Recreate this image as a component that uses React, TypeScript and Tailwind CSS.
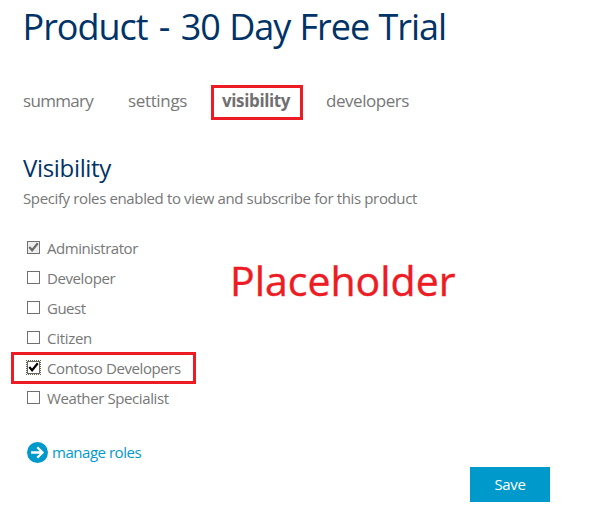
type State = "off" | "locked" | "focused";

const tabs = [
  { label: "summary", style: "ml-5 w-[105px] tracking-[-0.7px] text-[#777]" },
  { label: "settings", style: "w-[86px] tracking-[-0.35px] text-[#777]" },
  { label: "visibility", style: "w-[92px] border-[3px] border-[#ed1c24] pl-2 font-bold tracking-[-0.37px] text-[#707070]" },
  { label: "developers", style: "ml-5 tracking-[-0.45px] text-[#777]" },
];

const roles: { name: string; state: State; tracking: string }[] = [
  { name: "Administrator", state: "locked", tracking: "tracking-[-0.46px]" },
  { name: "Developer", state: "off", tracking: "tracking-[-0.4px]" },
  { name: "Guest", state: "off", tracking: "tracking-[-0.5px]" },
  { name: "Citizen", state: "off", tracking: "tracking-[-0.29px]" },
  { name: "Contoso Developers", state: "focused", tracking: "tracking-[-0.4px]" },
  { name: "Weather Specialist", state: "off", tracking: "tracking-[-0.4px]" },
];

function Checkbox({ state }: { state: State }) {
  const look =
    state === "focused"
      ? "border-[#666] outline outline-1 outline-dotted outline-[#62623c]"
      : state === "locked"
        ? "border-[#707070] bg-[#ededed]"
        : "border-[#707070]";
  return (
    <span className={`-mt-px block size-[13px] shrink-0 border ${look}`}>
      {state !== "off" && (
        <svg viewBox="0 0 11 11" className={`block size-[11px] ${state === "focused" ? "text-black" : "text-[#6b6b6b]"}`}>
          <path d="M1.3 5.1 4.1 8.2 9.8 1.2" fill="none" stroke="currentColor" strokeWidth="2.2" />
        </svg>
      )}
    </span>
  );
}

export default function App() {
  return (
    <main className="flex h-[515px] w-[607px] flex-col overflow-hidden bg-white font-['Open_Sans','Noto_Sans',sans-serif] text-[15px] text-[#777]">
      <h1 className="mt-1 h-[81px] pl-[22.5px] pt-px text-[36px] leading-[44px] tracking-[-1.03px] text-[#003366] [word-spacing:1px]">
        Product <span className="px-[2px]">-</span> 30 Day Free Trial
      </h1>
      <nav className="flex h-[35px] text-[17px] leading-[25px]">
        {tabs.map(({ label, style }) => (
          <a
            key={label}
            className={`box-border h-[35px] ${label === "visibility" ? "" : "border-[3px] border-transparent"} ${style}`}
          >
            {label}
          </a>
        ))}
      </nav>
      <h2 className="mt-8 h-9 pl-[23px] text-2xl leading-8 tracking-[-0.33px] text-[#003366]">Visibility</h2>
      <p className="h-5 pl-[23px] leading-5 tracking-[-0.37px]">Specify roles enabled to view and subscribe for this product</p>
      <section className="mt-[25px] flex h-[180px]">
        <ul className="w-[230px]">
          {roles.map(({ name, state, tracking }) => (
            <li key={name} className="relative flex h-[30px] items-center gap-[7px] pl-[27px]">
              <Checkbox state={state} />
              <span className={`leading-5 ${tracking}`}>{name}</span>
              {state === "focused" && <span className="absolute left-[11px] top-[-1px] h-8 w-[185px] border-[3px] border-[#ed1c24]" />}
            </li>
          ))}
        </ul>
        <strong className="mt-[22px] h-[50px] text-[41px] font-normal leading-[50px] tracking-[0px] text-[#ed1c24] [-webkit-text-stroke:0.4px_#ed1c24]">Placeholder</strong>
      </section>
      <a className="ml-[27px] mt-[29px] flex h-[21px] items-center gap-1 tracking-[-0.47px] text-[#0099cc]">
        <svg viewBox="0 0 21 21" className="size-[21px]">
          <circle cx="10.5" cy="10.5" r="10.5" fill="#0099cc" />
          <path d="M4 10.5h11M10.3 5.3l5.2 5.2-5.2 5.2" fill="none" stroke="white" strokeWidth="2.3" />
        </svg>
        manage roles
      </a>
      <button className="ml-[470px] mt-1 h-[35px] w-20 shrink-0 bg-[#0099cc] tracking-[-0.35px] text-white">Save</button>
    </main>
  );
}
